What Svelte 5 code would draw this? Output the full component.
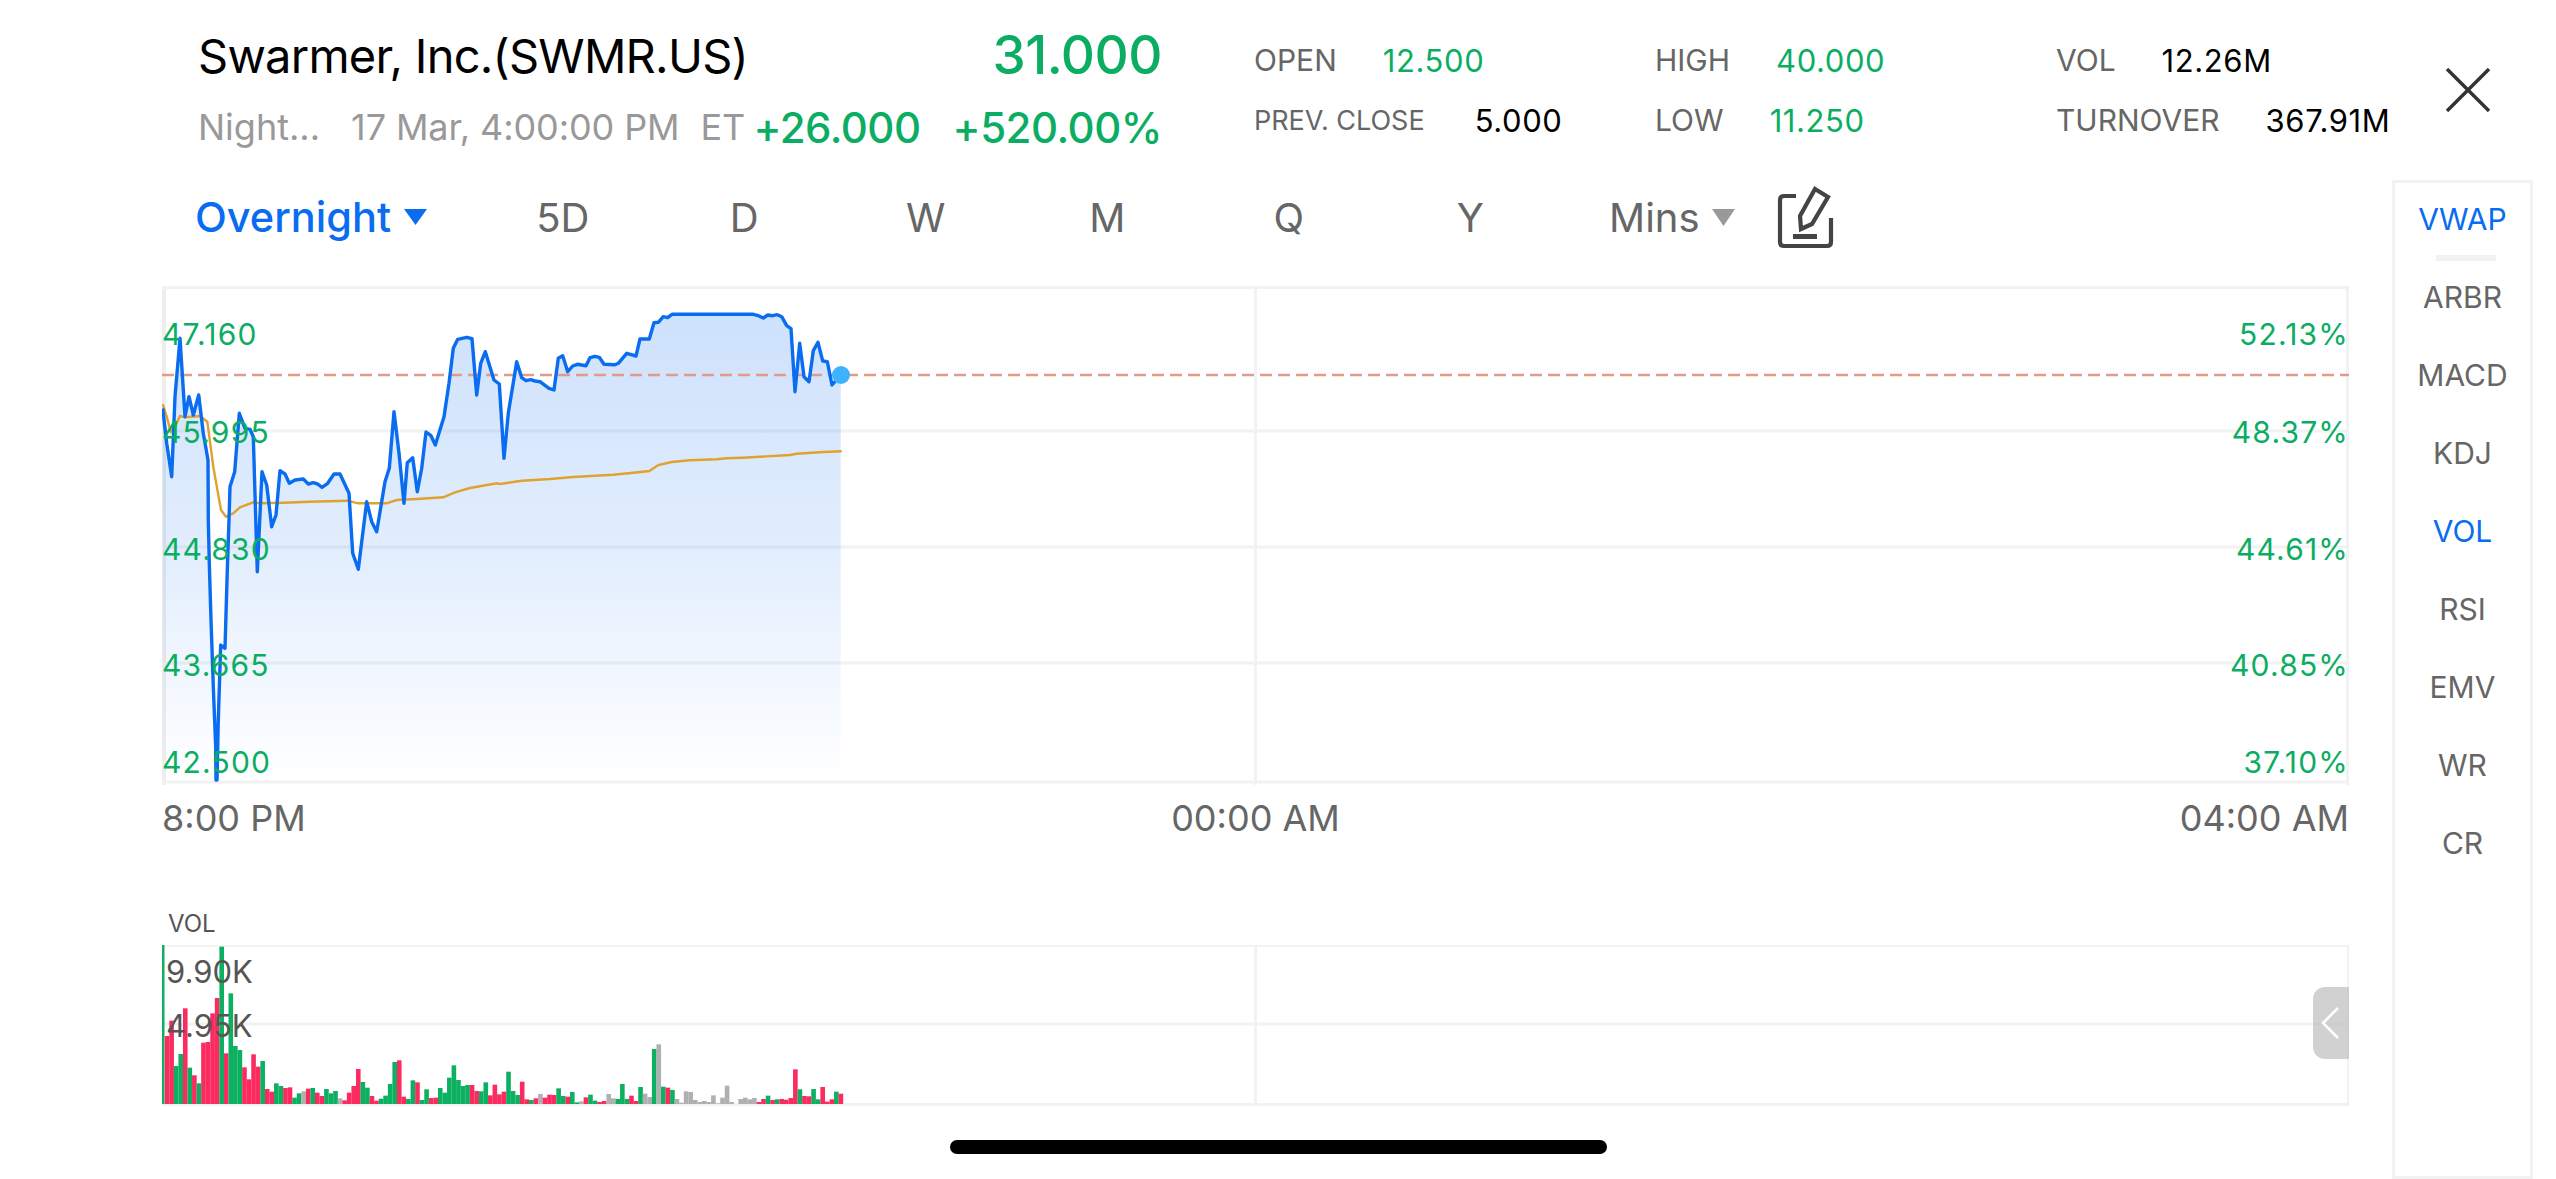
<script lang="ts">
	// traced points, in crop units (3x) from two crops of the chart
	const lineA = [[38,385],[50,490],[65,590],[75,350],[90,175],[105,410],[117,350],[130,405],[146,345],[160,460],[174,540],[175,720],[178,850],[183,1020],[190,1220],[197,1400],[198,1500],[201,1500],[205,1320],[212,1095],[225,1105],[232,870],[237,720],[240,620],[254,575],[268,400],[285,445],[300,448],[310,470],[322,875],[336,575],[350,615],[365,740],[378,705],[390,572],[405,582],[418,610],[435,600],[460,597],[475,612],[490,608],[503,612],[516,622],[533,610],[552,582],[570,582],[597,640],[608,820],[625,868],[650,665],[665,725],[680,755],[705,605],[718,565],[732,395],[747,520],[762,670],[772,548],[788,533],[802,635],[815,565],[828,456],[843,467],[856,495],[882,410],[897,310],[910,205],[923,178],[950,172],[966,176],[980,345],[992,250],[1006,215],[1032,300],[1048,312],[1062,535]];
	const lineB = [[25,400],[50,245],[65,293],[78,302],[92,299],[105,303],[120,305],[147,325],[162,330],[175,235],[188,227],[203,275],[218,258],[232,253],[258,257],[270,233],[285,229],[298,232],[312,253],[345,254],[355,250],[380,220],[408,228],[420,177],[448,177],[462,128],[475,127],[490,110],[503,113],[516,103],[760,103],[775,107],[790,114],[803,105],[818,107],[832,104],[845,110],[860,137],[873,146],[885,335],[899,190],[912,290],[927,305],[940,212],[954,187],[968,243],[982,245],[996,315],[1022,285]];
	const avgA = [[38,372],[50,410],[62,455],[75,440],[90,408],[105,412],[150,408],[172,425],[190,560],[213,690],[228,710],[250,700],[270,682],[310,667],[330,670],[400,668],[480,665],[590,662],[625,670],[710,670],[740,660],[800,657],[880,652],[915,637],[960,624],[1040,610]];
	const avgB = [[0,612],[65,602],[150,597],[220,591],[340,584],[400,578],[448,573],[475,555],[515,546],[570,541],[650,538],[680,535],[730,533],[870,525],[890,521],[970,516],[1025,514]];

	const toPage = (pts: number[][], ox: number) => pts.map(([x, y]) => [ox + x / 3, 280 + y / 3]);
	const str = (pts: number[][]) => pts.map(([x, y]) => `${x.toFixed(1)},${y.toFixed(1)}`).join(' ');

	const price = [...toPage(lineA, 150), ...toPage(lineB, 500)];
	const avg = [...toPage(avgA, 150), ...toPage(avgB, 500)];
	const area = str([[162.7, 782], ...price, [840.7, 782]]);

	// colour + bar height, one bar every 4.55px
	const volBars = 'g477 r204 r250 g114 g150 r287 g109 r86 g62 r184 r186 r272 r318 g472 r152 g332 g174 g162 r110 r74 r149 r112 g129 r45 r37 g62 g54 r48 r50 g19 g32 s38 r46 g48 r34 r24 g45 g32 g39 s17 r11 r34 r54 r105 g66 g49 r24 r10 g16 g25 g60 g126 r131 r22 g15 g71 r65 g12 g44 r18 r19 g48 g34 g79 g116 g72 g54 g57 r57 r39 g38 g65 r26 r58 r29 r37 g97 g39 g27 r67 r14 g12 r17 s30 r19 r28 r27 g47 g24 r22 g36 g5 s8 r20 g28 g10 r6 r9 s30 s17 g15 g60 g15 r25 r9 g51 s31 s21 g165 s179 g52 r49 g42 s15 s4 s38 s36 s12 s6 s9 s6 s26 s2 s19 s55 s6 s0 s15 s19 s14 s18 r6 r15 g25 r12 g14 r15 r13 r18 r104 g44 r24 r23 g45 g14 r51 r7 r14 g37 r31'
		.split(' ')
		.map((b) => ({ c: b[0], h: Number(b.slice(1)) / 3 }));
	const volFill: Record<string, string> = { g: '#0bb061', r: '#fb2a5f', s: '#b0b0b0' };

	const yLabels = [
		{ left: '47.160', right: '52.13%', y: 334 },
		{ left: '45.995', right: '48.37%', y: 432 },
		{ left: '44.830', right: '44.61%', y: 549 },
		{ left: '43.665', right: '40.85%', y: 665 },
		{ left: '42.500', right: '37.10%', y: 762 },
	];

	const tabs = ['5D', 'D', 'W', 'M', 'Q', 'Y'];
	const indicators = ['VWAP', 'ARBR', 'MACD', 'KDJ', 'VOL', 'RSI', 'EMV', 'WR', 'CR'];
</script>

<div class="page">
	<header class="quote">
		<div class="summary">
			<div class="summary-top">
				<span class="name">Swarmer, Inc.(SWMR.US)</span>
				<span class="last">31.000</span>
			</div>
			<div class="summary-sub">
				<span class="session">Night...</span>
				<span class="time">17 Mar, 4:00:00 PM</span>
				<span class="zone">ET</span>
				<span class="chg">+26.000</span>
				<span class="chg pct">+520.00%</span>
			</div>
		</div>
		<div class="stats">
			<div class="stat"><span class="k">OPEN</span><span class="v up">12.500</span></div>
			<div class="stat"><span class="k">HIGH</span><span class="v up">40.000</span></div>
			<div class="stat"><span class="k">VOL</span><span class="v">12.26M</span></div>
			<div class="stat"><span class="k small">PREV. CLOSE</span><span class="v">5.000</span></div>
			<div class="stat"><span class="k">LOW</span><span class="v up">11.250</span></div>
			<div class="stat"><span class="k">TURNOVER</span><span class="v">367.91M</span></div>
		</div>
		<button class="close" aria-label="Close">
			<svg width="44" height="44" viewBox="0 0 44 44"><path d="M1 1 43 43M43 1 1 43" stroke="#333" stroke-width="3.4" fill="none" /></svg>
		</button>
	</header>

	<div class="body">
		<main class="main">
			<nav class="tabs">
				<div class="tab session-tab">
					<span>Overnight</span>
					<svg width="23" height="16" viewBox="0 0 23 16"><path d="M0 0H23L11.5 16Z" fill="#0a6cf0" /></svg>
				</div>
				{#each tabs as t}
					<div class="tab">{t}</div>
				{/each}
				<div class="tab mins">
					<span>Mins</span>
					<svg width="23" height="17" viewBox="0 0 23 17"><path d="M0 0H23L11.5 17Z" fill="#999" /></svg>
				</div>
				<svg class="edit" width="100" height="90" viewBox="0 0 100 90">
					<g fill="none" stroke="#444" stroke-width="4.2">
						<path d="M37 24H25Q21 24 21 28V70Q21 74 25 74H68Q72 74 72 70V46" />
						<path d="M56 17 69 25 53 52 42 57 41 44Z" />
					</g>
					<rect x="34" y="62" width="24" height="5" fill="#444" />
				</svg>
			</nav>

			<section class="chart">
				<svg class="plot" width="2187" height="499" viewBox="162 286 2187 499">
					<defs>
						<linearGradient id="fade" gradientUnits="userSpaceOnUse" x1="0" y1="314" x2="0" y2="782">
							<stop offset="0" stop-color="#0a6cf0" stop-opacity="0.2" />
							<stop offset="0.5" stop-color="#0a6cf0" stop-opacity="0.12" />
							<stop offset="1" stop-color="#0a6cf0" stop-opacity="0" />
						</linearGradient>
					</defs>
					<rect x="162" y="286" width="4" height="499" fill="#eeeeee" />
					<rect x="2346" y="286" width="3" height="499" fill="#f2f2f2" />
					<rect x="1254" y="286" width="3" height="499" fill="#f2f2f2" />
					<rect x="162" y="286" width="2187" height="3" fill="#f2f2f2" />
					<rect x="162" y="429.5" width="2187" height="3" fill="#f2f2f2" />
					<rect x="162" y="545.5" width="2187" height="3" fill="#f2f2f2" />
					<rect x="162" y="661.5" width="2187" height="3" fill="#f2f2f2" />
					<rect x="162" y="780.5" width="2187" height="3" fill="#f2f2f2" />
					<polygon points={area} fill="url(#fade)" />
					<line x1="162" y1="375" x2="2349" y2="375" stroke="#e39b88" stroke-width="2.4" stroke-dasharray="12 6" />
					<polyline points={str(avg)} fill="none" stroke="#e0a22e" stroke-width="2.4" />
					<polyline points={str(price)} fill="none" stroke="#0a6cf0" stroke-width="3.4" stroke-linejoin="round" />
					<circle cx="841" cy="375" r="9" fill="#3fb2ff" />
				</svg>
				{#each yLabels as l}
					<span class="y-label left" style="top: {l.y - 286}px">{l.left}</span>
					<span class="y-label right" style="top: {l.y - 286}px">{l.right}</span>
				{/each}
			</section>

			<div class="axis">
				<span>8:00 PM</span>
				<span>00:00 AM</span>
				<span>04:00 AM</span>
			</div>

			<div class="vol-title">VOL</div>
			<section class="vol">
				<svg class="plot" width="2187" height="161" viewBox="162 945 2187 161">
					<rect x="162" y="945" width="2187" height="2" fill="#f3f3f3" />
					<rect x="162" y="1022.5" width="2187" height="3" fill="#f2f2f2" />
					<rect x="162" y="1103" width="2187" height="3" fill="#f2f2f2" />
					<rect x="1254" y="945" width="3" height="161" fill="#f2f2f2" />
					<rect x="2347" y="945" width="2" height="161" fill="#f2f2f2" />
					{#each volBars as b, i}
						<rect
							x={i === 0 ? 162 : 160.2 + i * 4.553}
							y={1104 - b.h}
							width={i === 0 ? 2.5 : 4.6}
							height={b.h}
							fill={volFill[b.c]}
						/>
					{/each}
				</svg>
				<span class="vol-label" style="top: 27px">9.90K</span>
				<span class="vol-label" style="top: 81px">4.95K</span>
				<div class="handle">
					<svg width="20" height="34" viewBox="0 0 20 34"><path d="M18 2 3 17 18 32" fill="none" stroke="#fff" stroke-width="2.5" /></svg>
				</div>
			</section>
		</main>

		<aside class="side">
			<div class="ind-list">
				{#each indicators as name, i}
					<div class="ind" class:on={name === 'VWAP' || name === 'VOL'}>
						{name}
						{#if i === 0}<span class="ind-mark"></span>{/if}
					</div>
				{/each}
			</div>
		</aside>
	</div>

	<div class="home"></div>
</div>

<style>
	:global(body) {
		margin: 0;
		background: #fff;
	}

	.page {
		position: relative;
		width: 2556px;
		height: 1179px;
		overflow: hidden;
		display: flex;
		flex-direction: column;
		font-family: Inter, 'Liberation Sans', sans-serif;
		color: #000;
	}

	.quote {
		height: 174px;
		flex-shrink: 0;
		display: flex;
		padding-left: 198px;
		box-sizing: border-box;
	}

	.summary {
		width: 964px;
		padding-top: 26px;
	}

	.summary-top {
		display: flex;
		justify-content: space-between;
		align-items: center;
		height: 58px;
	}

	.name {
		font-size: 47px;
		letter-spacing: -0.75px;
	}

	.last {
		font-size: 53px;
		font-weight: 500;
		color: #0bad62;
		letter-spacing: -0.5px;
	}

	.summary-sub {
		display: flex;
		align-items: center;
		height: 44px;
		margin-top: 21px;
		font-size: 36px;
		color: #999;
		white-space: nowrap;
	}

	.time {
		margin-left: 31px;
		letter-spacing: -0.1px;
	}

	.zone {
		margin-left: 21px;
	}

	.chg {
		margin-left: auto;
		font-size: 42px;
		font-weight: 500;
		color: #0bad62;
		letter-spacing: -0.5px;
	}

	.pct {
		margin-left: 32px;
	}

	.stats {
		margin-left: 92px;
		padding-top: 38px;
		display: grid;
		grid-template-columns: 401px 401px auto;
		grid-auto-rows: 60px;
		height: 120px;
	}

	.stat {
		display: flex;
		align-items: center;
		height: 44px;
		font-size: 30px;
		white-space: nowrap;
	}

	.k {
		color: #666;
		margin-right: 46px;
	}

	.k.small {
		font-size: 27px;
		margin-right: 50px;
	}

	.v {
		font-size: 31px;
		letter-spacing: 0.6px;
	}

	.up {
		color: #0bad62;
	}

	.close {
		position: absolute;
		left: 2446px;
		top: 68px;
		width: 44px;
		height: 44px;
		padding: 0;
		border: 0;
		background: none;
	}

	.close svg {
		display: block;
	}

	.body {
		display: flex;
		flex: 1;
		min-height: 0;
	}

	.main {
		width: 2392px;
		flex-shrink: 0;
		padding-left: 162px;
		box-sizing: border-box;
	}

	.tabs {
		display: flex;
		align-items: center;
		height: 86px;
		margin-bottom: 26px;
		font-size: 40px;
		color: #666;
	}

	.tab {
		width: 181.5px;
		flex-shrink: 0;
		text-align: center;
	}

	.session-tab {
		width: 310px;
		box-sizing: border-box;
		padding-left: 33px;
		display: flex;
		align-items: center;
		gap: 13px;
		font-size: 41.5px;
		color: #0a6cf0;
		font-weight: 500;
	}

	.mins {
		width: 220px;
		box-sizing: border-box;
		padding-left: 48px;
		display: flex;
		align-items: center;
		gap: 12px;
	}

	.edit {
		margin-left: -22px;
		flex-shrink: 0;
	}

	.chart {
		position: relative;
		width: 2187px;
		height: 499px;
	}

	.plot {
		display: block;
	}

	.y-label {
		position: absolute;
		transform: translateY(-50%);
		font-size: 30px;
		line-height: 36px;
		color: #0bad62;
		letter-spacing: 1.2px;
	}

	.left {
		left: 0;
	}

	.right {
		right: 0;
	}

	.axis {
		display: grid;
		grid-template-columns: 1fr auto 1fr;
		width: 2187px;
		height: 44px;
		margin-top: 11px;
		font-size: 36px;
		line-height: 44px;
		color: #666;
	}

	.axis span:last-child {
		text-align: right;
	}

	.vol-title {
		margin: 73px 0 0 6px;
		height: 22px;
		font-size: 24px;
		line-height: 22px;
		color: #555;
	}

	.vol {
		position: relative;
		width: 2187px;
		height: 161px;
		margin-top: 10px;
	}

	.vol-label {
		position: absolute;
		left: 4px;
		transform: translateY(-50%);
		font-size: 31px;
		line-height: 36px;
		color: #555;
	}

	.handle {
		position: absolute;
		right: 0;
		top: 42px;
		width: 36px;
		height: 72px;
		box-sizing: border-box;
		padding: 19px 0 0 7px;
		border-radius: 12px 0 0 12px;
		background: rgba(190, 190, 190, 0.7);
	}

	.handle svg {
		display: block;
	}

	.side {
		width: 141px;
		height: 999px;
		margin-top: 6px;
		flex-shrink: 0;
		box-sizing: border-box;
		border: 3px solid #f2f2f2;
		font-size: 30px;
		color: #666;
	}

	.ind-list {
		margin-top: -3px;
	}

	.ind {
		position: relative;
		height: 78px;
		line-height: 78px;
		text-align: center;
	}

	.on {
		color: #0a6cf0;
	}

	.ind-mark {
		position: absolute;
		left: 41px;
		top: 75px;
		width: 60px;
		height: 6px;
		background: #f2f2f2;
	}

	.home {
		position: absolute;
		left: 950px;
		bottom: 25px;
		width: 657px;
		height: 14px;
		border-radius: 7px;
		background: #000;
	}
</style>
